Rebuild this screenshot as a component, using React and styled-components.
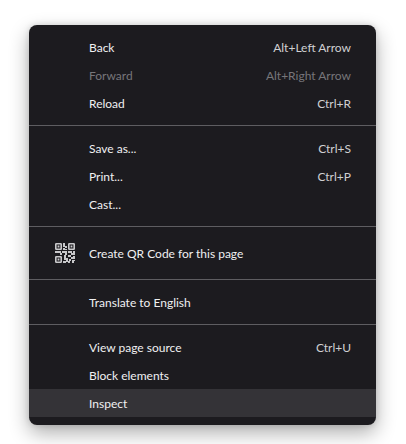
import React from 'react';
import styled, { createGlobalStyle } from 'styled-components';

const GROUPS = [
    [
        { label: 'Back', shortcut: 'Alt+Left Arrow' },
        { label: 'Forward', shortcut: 'Alt+Right Arrow', disabled: true },
        { label: 'Reload', shortcut: 'Ctrl+R' },
    ],
    [
        { label: 'Save as...', shortcut: 'Ctrl+S' },
        { label: 'Print...', shortcut: 'Ctrl+P' },
        { label: 'Cast...' },
    ],
    [{ label: 'Create QR Code for this page', icon: true }],
    [{ label: 'Translate to English' }],
    [
        { label: 'View page source', shortcut: 'Ctrl+U' },
        { label: 'Block elements' },
        { label: 'Inspect', active: true },
    ],
];

const QrIcon = () => (
    <svg width="20" height="20" viewBox="0 0 20 20" fill="none" aria-hidden="true">
        <g stroke="#c8c8ca" strokeWidth="1.6">
            <rect x="0.8" y="0.8" width="5.4" height="5.4" rx="0.5" />
            <rect x="13.8" y="0.8" width="5.4" height="5.4" rx="0.5" />
            <rect x="0.8" y="13.8" width="5.4" height="5.4" rx="0.5" />
        </g>
        <path
            fill="#c8c8ca"
            d="M2.6 2.6h1.8v1.8H2.6zM15.6 2.6h1.8v1.8h-1.8zM2.6 15.6h1.8v1.8H2.6zM8 0h2v4H8zM10 3h2v2h-2zM8 5h2v2H8zM10 6h2v1h-2zM0 8h6v2H0zM5 10h2v2H5zM7 8h5v2H7zM10 10h2v2h-2zM13 8h4v2h-4zM16 10h2v2h-2zM18 8h2v4h-2zM9 12h2v5H9zM8 18h3v2H8zM11 15h2v4h-2zM13 12h3v2h-3zM16 14h2v2h-2zM18 13h2v3h-2zM14 16h2v2h-2zM13 18h2v2h-2zM17 17h3v1h-3zM17 18h2v2h-2z"
        />
    </svg>
);

const App = () => {
    return (
        <Page>
            <GlobalStyle />
            <Menu role="menu">
                {GROUPS.map((items, index) => (
                    <Group key={index} role="group">
                        {items.map(({ label, shortcut, icon, active, disabled }) => (
                            <Item key={label} role="menuitem" $tall={icon} $active={active} disabled={disabled}>
                                <IconSlot>{icon && <QrIcon />}</IconSlot>
                                <Label>{label}</Label>
                                {shortcut && <Shortcut>{shortcut}</Shortcut>}
                            </Item>
                        ))}
                    </Group>
                ))}
            </Menu>
        </Page>
    );
};

const GlobalStyle = createGlobalStyle`
    * {
        box-sizing: border-box;
    }

    body {
        margin: 0;
        background: #ffffff;
    }
`;

const Page = styled.main`
    padding: 25px 30px 19px 29px;
    overflow: hidden;
`;

const Menu = styled.div`
    border-radius: 8px;
    background: #1c1b1f;
    box-shadow: 0 8px 20px rgba(0, 0, 0, 0.32), 0 0 6px rgba(0, 0, 0, 0.14);
    overflow: hidden;
`;

const Group = styled.div`
    padding: 8px 0;

    & + & {
        border-top: 1px solid #5e5d61;
    }
`;

const Item = styled.button`
    display: flex;
    align-items: center;
    width: 100%;
    height: ${({ $tall }) => ($tall ? 36 : 28)}px;
    padding: 0 25px 0 26px;
    border: 0;
    background: ${({ $active }) => ($active ? '#343337' : 'transparent')};
    color: #f0f0f2;
    font: 12px/16px Lato, 'Open Sans', sans-serif;
    text-align: left;
    white-space: nowrap;

    &:disabled {
        color: #77767a;
    }
`;

const IconSlot = styled.span`
    display: flex;
    flex: none;
    width: 34px;
`;

const Label = styled.span`
    flex: 1;
    padding-top: 2px;
`;

const Shortcut = styled.span`
    padding-top: 2px;
    color: #d0d0d2;

    ${Item}:disabled & {
        color: inherit;
    }
`;

export default App;
